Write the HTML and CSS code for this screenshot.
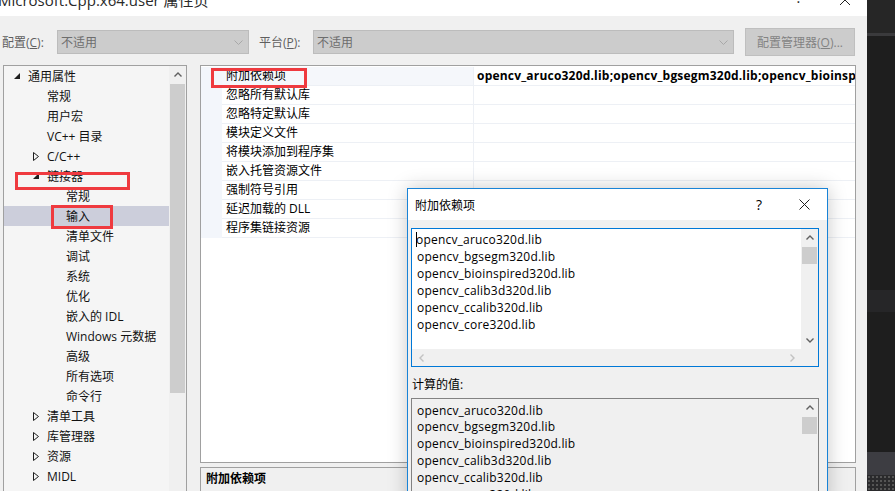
FILE: index.html
```html
<!DOCTYPE html>
<html lang="zh-CN">
<head>
  <meta charset="UTF-8">
  <title>Microsoft.Cpp.x64.user 属性页</title>
  <link rel="stylesheet" href="styles.css">
</head>
<body>
  <div class="screen">
    <div class="window">
      <div class="titlebar">
        <span class="title">Microsoft.Cpp.x64.user 属性页</span>
        <span class="help">?</span>
        <span class="close">
          <svg width="10" height="10" viewBox="0 0 10 10"><path d="M0 0L10 10M10 0L0 10" stroke="#222" stroke-width="1"/></svg>
        </span>
      </div>

      <div class="toolbar">
        <span class="lbl lbl-config">配置(<u>C</u>):</span>
        <div class="combo combo-config">
          <span>不适用</span>
          <svg width="9" height="5" viewBox="0 0 9 5"><polyline points="0.5,0.5 4.5,4.5 8.5,0.5" fill="none" stroke="#a8a8a8"/></svg>
        </div>
        <span class="lbl lbl-platform">平台(<u>P</u>):</span>
        <div class="combo combo-platform">
          <span>不适用</span>
          <svg width="9" height="5" viewBox="0 0 9 5"><polyline points="0.5,0.5 4.5,4.5 8.5,0.5" fill="none" stroke="#a8a8a8"/></svg>
        </div>
        <button class="btn">配置管理器(<u>O</u>)...</button>
      </div>

      <div class="main">
        <div class="tree">
          <ul class="tree-list">
            <li class="node lv0"><span class="tog"><svg width="6" height="6" viewBox="0 0 6 6"><polygon points="6,0 6,6 0,6" fill="#1e1e1e"/></svg></span>通用属性</li>
            <li class="node lv1"><span class="tog"></span>常规</li>
            <li class="node lv1"><span class="tog"></span>用户宏</li>
            <li class="node lv1"><span class="tog"></span>VC++ 目录</li>
            <li class="node lv1"><span class="tog"><svg width="6" height="9" viewBox="0 0 6 9"><polygon points="0.5,0.5 5.5,4.5 0.5,8.5" fill="none" stroke="#1e1e1e"/></svg></span>C/C++</li>
            <li class="node lv1"><span class="tog"><svg width="6" height="6" viewBox="0 0 6 6"><polygon points="6,0 6,6 0,6" fill="#1e1e1e"/></svg></span>链接器</li>
            <li class="node lv2"><span class="tog"></span>常规</li>
            <li class="node lv2 selected"><span class="tog"></span>输入</li>
            <li class="node lv2"><span class="tog"></span>清单文件</li>
            <li class="node lv2"><span class="tog"></span>调试</li>
            <li class="node lv2"><span class="tog"></span>系统</li>
            <li class="node lv2"><span class="tog"></span>优化</li>
            <li class="node lv2"><span class="tog"></span>嵌入的 IDL</li>
            <li class="node lv2"><span class="tog"></span>Windows 元数据</li>
            <li class="node lv2"><span class="tog"></span>高级</li>
            <li class="node lv2"><span class="tog"></span>所有选项</li>
            <li class="node lv2"><span class="tog"></span>命令行</li>
            <li class="node lv1"><span class="tog"><svg width="6" height="9" viewBox="0 0 6 9"><polygon points="0.5,0.5 5.5,4.5 0.5,8.5" fill="none" stroke="#1e1e1e"/></svg></span>清单工具</li>
            <li class="node lv1"><span class="tog"><svg width="6" height="9" viewBox="0 0 6 9"><polygon points="0.5,0.5 5.5,4.5 0.5,8.5" fill="none" stroke="#1e1e1e"/></svg></span>库管理器</li>
            <li class="node lv1"><span class="tog"><svg width="6" height="9" viewBox="0 0 6 9"><polygon points="0.5,0.5 5.5,4.5 0.5,8.5" fill="none" stroke="#1e1e1e"/></svg></span>资源</li>
            <li class="node lv1"><span class="tog"><svg width="6" height="9" viewBox="0 0 6 9"><polygon points="0.5,0.5 5.5,4.5 0.5,8.5" fill="none" stroke="#1e1e1e"/></svg></span>MIDL</li>
          </ul>
          <div class="vscroll">
            <div class="arrow"><svg width="8" height="5" viewBox="0 0 8 5"><polyline points="0.5,4.5 4,1 7.5,4.5" fill="none" stroke="#606060" stroke-width="1.4"/></svg></div>
            <div class="thumb tree-thumb"></div>
          </div>
        </div>

        <div class="right">
          <div class="grid">
            <div class="prop first"><span class="gut"></span><span class="name">附加依赖项</span><span class="val">opencv_aruco320d.lib;opencv_bgsegm320d.lib;opencv_bioinspired320d.lib;opencv_calib3d320d.lib</span></div>
            <div class="prop"><span class="gut"></span><span class="name">忽略所有默认库</span><span class="val"></span></div>
            <div class="prop"><span class="gut"></span><span class="name">忽略特定默认库</span><span class="val"></span></div>
            <div class="prop"><span class="gut"></span><span class="name">模块定义文件</span><span class="val"></span></div>
            <div class="prop"><span class="gut"></span><span class="name">将模块添加到程序集</span><span class="val"></span></div>
            <div class="prop"><span class="gut"></span><span class="name">嵌入托管资源文件</span><span class="val"></span></div>
            <div class="prop"><span class="gut"></span><span class="name">强制符号引用</span><span class="val"></span></div>
            <div class="prop"><span class="gut"></span><span class="name">延迟加载的 DLL</span><span class="val"></span></div>
            <div class="prop"><span class="gut"></span><span class="name">程序集链接资源</span><span class="val"></span></div>
          </div>
          <div class="desc">附加依赖项</div>
        </div>
      </div>
    </div>

    <div class="dark">
      <div class="band b-top"></div>
      <div class="band b-line"></div>
      <div class="band b-fill"></div>
      <div class="band b-mid"></div>
      <div class="band b-fill2"></div>
      <div class="band b-tab"></div>
      <div class="band b-dots"></div>
    </div>

    <div class="dialog">
      <div class="dlg-title">
        <span class="dlg-name">附加依赖项</span>
        <span class="dlg-help">?</span>
        <span class="dlg-close">
          <svg width="11" height="11" viewBox="0 0 11 11"><path d="M0.5 0.5L10.5 10.5M10.5 0.5L0.5 10.5" stroke="#1e1e1e" stroke-width="1"/></svg>
        </span>
      </div>
      <div class="dlg-body">
        <div class="textbox editable">
          <div class="lines">
            <div><span class="caret"></span>opencv_aruco320d.lib</div>
            <div>opencv_bgsegm320d.lib</div>
            <div>opencv_bioinspired320d.lib</div>
            <div>opencv_calib3d320d.lib</div>
            <div>opencv_ccalib320d.lib</div>
            <div>opencv_core320d.lib</div>
          </div>
          <div class="vscroll tb-scroll">
            <div class="arrow"><svg width="8" height="5" viewBox="0 0 8 5"><polyline points="0.5,4.5 4,1 7.5,4.5" fill="none" stroke="#606060" stroke-width="1.4"/></svg></div>
            <div class="thumb"></div>
            <div class="spacer"></div>
            <div class="arrow"><svg width="8" height="5" viewBox="0 0 8 5"><polyline points="0.5,0.5 4,4 7.5,0.5" fill="none" stroke="#606060" stroke-width="1.4"/></svg></div>
          </div>
          <div class="hscroll">
            <svg width="5" height="8" viewBox="0 0 5 8"><polyline points="4.5,0.5 1,4 4.5,7.5" fill="none" stroke="#c2c2c2" stroke-width="1.4"/></svg>
            <svg width="5" height="8" viewBox="0 0 5 8"><polyline points="0.5,0.5 4,4 0.5,7.5" fill="none" stroke="#c2c2c2" stroke-width="1.4"/></svg>
          </div>
          <div class="corner"></div>
        </div>

        <div class="dlg-label">计算的值:</div>

        <div class="textbox readonly">
          <div class="lines">
            <div>opencv_aruco320d.lib</div>
            <div>opencv_bgsegm320d.lib</div>
            <div>opencv_bioinspired320d.lib</div>
            <div>opencv_calib3d320d.lib</div>
            <div>opencv_ccalib320d.lib</div>
            <div>opencv_core320d.lib</div>
          </div>
          <div class="vscroll tb-scroll">
            <div class="arrow"><svg width="8" height="5" viewBox="0 0 8 5"><polyline points="0.5,4.5 4,1 7.5,4.5" fill="none" stroke="#606060" stroke-width="1.4"/></svg></div>
            <div class="thumb"></div>
          </div>
        </div>
      </div>
    </div>

    <!-- marcas rojas de la captura -->
    <div class="mark mark-dep"></div>
    <div class="mark mark-linker"></div>
    <div class="mark mark-input"></div>
  </div>
</body>
</html>
```

FILE: styles.css
```css
* {
  box-sizing: border-box;
}

body {
  margin: 0;
  background-color: #1e1e1e;
  font-family: "Open Sans", "Noto Sans CJK SC", sans-serif;
  font-size: 12px;
  color: #000;
}

.screen {
  position: relative;
  width: 895px;
  height: 491px;
  overflow: hidden;
  display: flex;
}

.window {
  width: 867px;
  background-color: #f0f0f0;
  display: flex;
  flex-direction: column;
  overflow: hidden;
}

/* barra de titulo, cortada arriba */
.titlebar {
  height: 16px;
  flex: none;
  background-color: #fff;
  display: flex;
  overflow: hidden;
}

.titlebar .title {
  flex: 1;
  margin: -10px 0 0 -2px;
  line-height: 20px;
  font-size: 15px;
  color: #2a2a2a;
  white-space: nowrap;
}

.titlebar .help {
  width: 20px;
  margin: -13px 13px 0 0;
  line-height: 20px;
  font-size: 15px;
  text-align: center;
  color: #2a2a2a;
}

.titlebar .close {
  width: 45px;
  display: flex;
  justify-content: center;
}

.titlebar .close svg {
  margin-top: -5px;
}

.toolbar {
  height: 49px;
  flex: none;
  display: flex;
  align-items: center;
  padding: 3px 0 0 2px;
}

.lbl {
  color: #5f5f5f;
  white-space: nowrap;
}

.lbl-config {
  width: 55px;
}

.lbl-platform {
  width: 54px;
  margin-left: 10px;
}

.combo {
  height: 24px;
  background-color: #cccccc;
  border: 1px solid #bcbcbc;
  display: flex;
  align-items: center;
  justify-content: space-between;
  padding: 0 5px 0 3px;
  color: #6d6d6d;
}

.combo-config {
  width: 192px;
}

.combo-platform {
  width: 421px;
}

.btn {
  margin-left: 11px;
  width: 110px;
  height: 28px;
  background-color: #cccccc;
  border: 1px solid #bfbfbf;
  color: #838383;
  font: inherit;
  padding: 0;
}

.main {
  flex: none;
  height: 440px;
  display: flex;
  gap: 13px;
  padding: 0 11px 0 3px;
}

/* arbol de la izquierda */
.tree {
  width: 184px;
  border: 1px solid #a0a0a0;
  background-color: #f5f5f5;
  display: flex;
}

.tree-list {
  flex: 1;
  list-style: none;
  margin: 0;
  padding: 0;
}

.node {
  height: 20px;
  display: flex;
  align-items: center;
  white-space: nowrap;
  color: #111;
}

.node .tog {
  width: 16px;
  flex: none;
  display: flex;
  align-items: center;
}

.node .tog svg {
  margin-left: 2px;
}

.lv0 { padding-left: 8px; }
.lv1 { padding-left: 27px; }
.lv2 { padding-left: 46px; }

.node.selected {
  background-color: #cccedb;
}

.vscroll {
  width: 17px;
  background-color: #f0f0f0;
  display: flex;
  flex-direction: column;
  align-items: center;
}

.vscroll .arrow {
  height: 17px;
  width: 100%;
  display: flex;
  align-items: center;
  justify-content: center;
  flex: none;
}

.thumb {
  width: 15px;
  height: 17px;
  background-color: #cdcdcd;
  flex: none;
}

.tree-thumb {
  height: 309px;
  margin-top: 1px;
}

/* tabla de propiedades */
.right {
  width: 656px;
  display: flex;
  flex-direction: column;
}

.grid {
  height: 398px;
  flex: none;
  border: 1px solid #a0a0a0;
  background-color: #fff;
  padding-top: 1px;
  overflow: hidden;
}

.prop {
  display: flex;
  height: 19px;
  line-height: 18px;
}

.prop .gut {
  width: 21px;
  flex: none;
  background-color: #f3f6fb;
}

.prop .name {
  width: 252px;
  flex: none;
  padding-left: 4px;
  border-bottom: 1px solid #edf0f5;
  border-right: 1px solid #edf0f5;
  white-space: nowrap;
}

.prop .val {
  flex: 1;
  padding-left: 3px;
  border-bottom: 1px solid #edf0f5;
  font-weight: bold;
  letter-spacing: 0.2px;
  white-space: nowrap;
  overflow: hidden;
}

.prop.first .name {
  background-color: #f5f7fb;
}

.desc {
  margin-top: 4px;
  flex: 1;
  border: 1px solid #a0a0a0;
  padding: 2px 0 0 5px;
  line-height: 18px;
  font-weight: bold;
}

/* lado oscuro del IDE */
.dark {
  flex: 1;
  display: flex;
  flex-direction: column;
}

.band { flex: none; }
.b-top { height: 33px; background-color: #262626; }
.b-line { height: 3px; background-color: #3a3a3c; }
.b-fill { height: 254px; background-color: #1e1e1e; }
.b-mid { height: 22px; background-color: #262628; }
.b-fill2 { height: 140px; background-color: #1e1e1e; }
.b-tab { height: 23px; background-color: #3d3d42; }
.b-dots {
  height: 16px;
  background-color: #2a2a2c;
  background-image: radial-gradient(#555 0.8px, transparent 1px);
  background-size: 4px 4px;
}

/* dialogo */
.dialog {
  position: absolute;
  left: 407px;
  top: 188px;
  width: 421px;
  height: 320px;
  border: 1px solid #1883d7;
  background-color: #f0f0f0;
  box-shadow: 0 0 18px rgba(0, 0, 0, 0.22);
}

.dlg-title {
  height: 31px;
  background-color: #fff;
  display: flex;
  align-items: center;
  padding-left: 7px;
}

.dlg-name {
  flex: 1;
}

.dlg-help {
  width: 20px;
  margin-right: 12px;
  text-align: center;
  font-size: 14px;
}

.dlg-close {
  width: 46px;
  display: flex;
  justify-content: center;
}

.dlg-body {
  padding: 8px 8px 0 3px;
}

.textbox {
  display: grid;
  grid-template-columns: 1fr 17px;
  background-color: #fff;
  border: 1px solid #0078d7;
}

.textbox.editable {
  height: 139px;
  grid-template-rows: 1fr 17px;
}

.textbox.readonly {
  height: 200px;
  background-color: #f0f0f0;
  border-color: #828282;
}

.lines {
  padding: 3px 0 0 5px;
  line-height: 16.9px;
  letter-spacing: 0.2px;
  white-space: nowrap;
  overflow: hidden;
}

.readonly .lines {
  padding-top: 3.5px;
}

.caret {
  display: inline-block;
  width: 1px;
  height: 15px;
  background-color: #000;
  vertical-align: -3px;
  margin: 0 -1px 0 -1px;
}

.tb-scroll {
  width: 17px;
}

.tb-scroll .thumb {
  margin-top: 1px;
}

.tb-scroll .spacer {
  flex: 1;
}

.hscroll {
  background-color: #f0f0f0;
  display: flex;
  align-items: center;
  justify-content: space-between;
  padding: 0 6px 0 7px;
}

.corner {
  background-color: #f0f0f0;
}

.dlg-label {
  height: 31px;
  padding: 9px 0 0 1px;
  line-height: 18px;
}

/* recuadros rojos */
.mark {
  position: absolute;
  border: 3px solid #ef3a3f;
}

.mark-dep {
  left: 211px;
  top: 68px;
  width: 96px;
  height: 20px;
}

.mark-linker {
  left: 15px;
  top: 172px;
  width: 115px;
  height: 18px;
}

.mark-input {
  left: 51px;
  top: 205px;
  width: 62px;
  height: 24px;
}
```
